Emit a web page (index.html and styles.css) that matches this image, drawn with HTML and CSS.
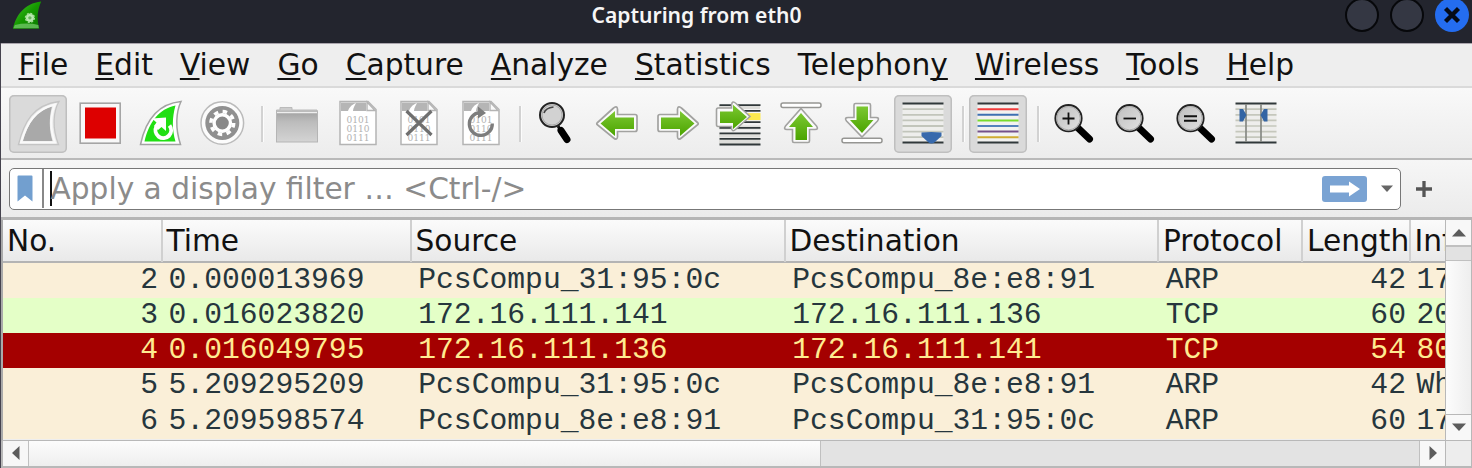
FILE: index.html
```html
<!DOCTYPE html>
<html lang="en">
<head>
<meta charset="utf-8">
<title>Capturing from eth0</title>
<link rel="stylesheet" href="styles.css">
</head>
<body>
<svg class="defs" width="0" height="0">
  <defs>
    <linearGradient id="green" x1="0" y1="0" x2="0" y2="1"><stop offset="0" stop-color="#7cc832"/><stop offset="1" stop-color="#4ba400"/></linearGradient>
    <linearGradient id="folder" x1="0" y1="0" x2="0" y2="1"><stop offset="0" stop-color="#a0a0a0"/><stop offset=".35" stop-color="#bcbcbc"/><stop offset="1" stop-color="#d4d4d4"/></linearGradient>
    <linearGradient id="lens" x1="0" y1="0" x2="1" y2="1"><stop offset="0" stop-color="#bdbdbd"/><stop offset="1" stop-color="#e2e2e2"/></linearGradient>
    <linearGradient id="logo" x1="0" y1="0" x2="1" y2="1"><stop offset="0" stop-color="#49c92c"/><stop offset=".5" stop-color="#159900"/><stop offset="1" stop-color="#087300"/></linearGradient>
    <symbol id="doc" viewBox="0 0 58 58">
      <path d="M11 6.500H39L47 14.500V49.500H11Z" fill="#fff" stroke="#b4b4b4" stroke-width="1.500"/>
      <path d="M12 7.500H37V16H24C24 13 26 10 27 8C22 10 20 13 19 16H12Z" fill="#b5b5b5"/>
      <path d="M38 7V15.500H46Z" fill="#fafafa" stroke="#b4b4b4" stroke-width="1.400"/>
      <text class="bits" x="17.500" y="28.300" textLength="23" lengthAdjust="spacingAndGlyphs">0101</text>
      <text class="bits" x="17.500" y="36.900" textLength="23" lengthAdjust="spacingAndGlyphs">0110</text>
      <text class="bits" x="17.500" y="45.500" textLength="23" lengthAdjust="spacingAndGlyphs">0111</text>
    </symbol>
    <symbol id="glass" viewBox="0 0 58 58">
      <path d="M34 33L45.500 44" stroke="#000" stroke-width="7" stroke-linecap="round"/>
      <circle cx="24.500" cy="23.200" r="13.200" fill="url(#lens)" stroke="#222" stroke-width="1.800"/>
      <circle cx="24.500" cy="23.200" r="11.700" fill="none" stroke="#aaa" stroke-width="1"/>
    </symbol>
  </defs>
</svg>
<div class="window">
  <header class="titlebar">
    <svg class="logo" viewBox="0 0 34 32"><path d="M1 30C4 16 13 3 31 1C27 10 26 19 29 30Z" fill="url(#logo)"/><path d="M1.500 29.500L3 26Q16 23 28 26L28.500 29.500Z" fill="#6ec564" opacity=".8"/><circle cx="19" cy="18.500" r="4.500" fill="#bce8b3" stroke="#a1dc94" stroke-width="2" stroke-dasharray="2 1.500"/><circle cx="19" cy="18.500" r="1.800" fill="#69b65e"/></svg>
    <h1 class="title">Capturing from eth0</h1>
    <div class="controls">
      <span class="control"></span><span class="control"></span>
      <span class="control close"><svg viewBox="0 0 34 34"><path d="M10.500 10.500L23.500 23.500M23.500 10.500L10.500 23.500" stroke="#050b18" stroke-width="4.300"/></svg></span>
    </div>
  </header>
  <nav class="menubar">
    <span><u>F</u>ile</span><span><u>E</u>dit</span><span><u>V</u>iew</span><span><u>G</u>o</span><span><u>C</u>apture</span><span><u>A</u>nalyze</span><span><u>S</u>tatistics</span><span>Telephon<u>y</u></span><span><u>W</u>ireless</span><span><u>T</u>ools</span><span><u>H</u>elp</span>
  </nav>
  <div class="toolbar">
    <div class="tool"><svg class="pressed" viewBox="0 0 58 58"><path d="M9.500 49.500C15 27 24 10 50 6.500C44 17 43 33 49.500 49.500Z" fill="#ececec" stroke="#c4c4c4" stroke-width="1.300"/><path d="M14 46C19 28 27 16 43 11.500C40 23 40 34 43.500 46Z" fill="#a9a9a9"/><path d="M12 47.500C18 27 27 14 46 9.500C41 21 41 34 46 47.500Z" fill="none" stroke="#fafafa" stroke-width="2"/></svg></div>
    <div class="tool"><svg viewBox="0 0 58 58"><rect x="9.200" y="8.200" width="40" height="40" fill="#f8f8f8" stroke="#a5a5a5" stroke-width="1.600"/><rect x="14" y="12.500" width="31" height="31" fill="#d00"/></svg></div>
    <div class="tool"><svg viewBox="0 0 58 58"><path d="M8.500 49.500C13 28 24 9 49 6.500C44 17 43 33 48.500 49.500Z" fill="#fff" stroke="#a2a2a2" stroke-width="1.500"/><path d="M12.500 46.500C17 27 27 14 43.500 10.500C40 23 40 34 43.500 46.500Z" fill="#20df13"/><path d="M37.500 30.500A7.800 7.800 0 1 1 24.500 31.500" fill="none" stroke="#fff" stroke-width="4"/><path d="M20 23.500L34 22.500V36L29.500 32L26 35L22 31L24.500 27.500Z" fill="#fff"/></svg></div>
    <div class="tool"><svg viewBox="0 0 58 58"><circle cx="29.300" cy="28" r="21.300" fill="#fcfcfc" stroke="#bbb" stroke-width="1.500"/><circle cx="29.300" cy="28" r="17" fill="#909090"/><circle cx="29.300" cy="28" r="11.400" fill="none" stroke="#fff" stroke-width="3.500" stroke-dasharray="4.500 4.453"/><circle cx="29.300" cy="28" r="8.200" fill="#888" stroke="#fff" stroke-width="3.400"/></svg></div>
    <i class="separator"></i>
    <div class="tool"><svg viewBox="0 0 58 58"><path d="M8.500 17V15H12V12.500H24V15H49V17Z" fill="#ccc" stroke="#bbb"/><rect x="8.500" y="16" width="41" height="31" fill="url(#folder)" stroke="#b5b5b5"/><path d="M9 17.500H49" stroke="#eee" stroke-width="1.500"/></svg></div>
    <div class="tool"><svg viewBox="0 0 58 58"><use href="#doc"/></svg></div>
    <div class="tool"><svg viewBox="0 0 58 58"><use href="#doc"/><path d="M16.500 16L41.500 40M41.500 16L16.500 40" stroke="#6f6f6f" stroke-width="3.200"/></svg></div>
    <div class="tool"><svg viewBox="0 0 58 58"><use href="#doc"/><path d="M28 17.500A11.500 11.500 0 1 0 40.300 28.500" fill="none" stroke="#7d7d7d" stroke-width="3.300"/><path d="M26 11.500L34 18L26 23.500Z" fill="#7d7d7d"/></svg></div>
    <i class="separator"></i>
    <div class="tool"><svg viewBox="0 0 58 58"><path d="M32 31L35 36" stroke="#111" stroke-width="3"/><path d="M35 35.500L41 44.500" stroke="#000" stroke-width="7" stroke-linecap="round"/><circle cx="26" cy="20" r="12" fill="#d2d2d2" stroke="#222" stroke-width="2"/><circle cx="26" cy="20" r="10" fill="none" stroke="#aaa"/><path d="M18 18Q19.500 13 27.500 12" fill="none" stroke="#444" stroke-width="1.600"/></svg></div>
    <div class="tool"><svg viewBox="0 0 58 58"><path d="M9 28L25 13.500Q29 10 29.500 14V19.500H47Q49 19.500 49 21.500V34.500Q49 36.500 47 36.500H29.500V42Q29 46 25 42.500L9 29.500Q8.500 28.500 9 28Z" fill="#fafafa" stroke="#a2a2a0" stroke-width="1.700"/><path d="M12.500 28.500L27 16V22.500H46V34H27V41Z" fill="url(#green)"/></svg></div>
    <div class="tool"><svg viewBox="0 0 58 58"><g transform="translate(58 0) scale(-1 1)"><path d="M9 28L25 13.500Q29 10 29.500 14V19.500H47Q49 19.500 49 21.500V34.500Q49 36.500 47 36.500H29.500V42Q29 46 25 42.500L9 29.500Q8.500 28.500 9 28Z" fill="#fafafa" stroke="#a2a2a0" stroke-width="1.700"/><path d="M12.500 28.500L27 16V22.500H46V34H27V41Z" fill="url(#green)"/></g></svg></div>
    <div class="tool"><svg viewBox="0 0 58 58"><path d="M9 12H50M9 32.500H50M9 40.500H50M9 47H50" stroke="#dededb" stroke-width="4"/><path d="M9.500 10.200H50.500M9.500 15.900H50.500M9.500 27.200H50.500M9.500 32.800H50.500M9.500 38.400H50.500M9.500 43.900H50.500M9.500 49.500H50.500" stroke="#30383a" stroke-width="1.800"/><path d="M38 21.600H50.500" stroke="#fce94f" stroke-width="7"/><path d="M40 21.500L26 34Q22 38 21.500 33V31.500H8Q6.500 31.500 6.500 29.500V15Q6.500 13 8 13H21.500V10Q22 5 26 8.500Z" fill="#fafafa" stroke="#a2a2a0" stroke-width="1.600"/><path d="M37 22L23 9.800V16.500H10V28H23V34Z" fill="url(#green)"/></svg></div>
    <div class="tool"><svg viewBox="0 0 58 58"><rect x="9" y="8" width="40" height="4.500" rx="2" fill="#fff" stroke="#969693" stroke-width="1.500"/><path d="M29 13.500L44.500 31Q47 34.500 43 34.500H37.500V46Q37.500 47.500 36 47.500H22Q20.500 47.500 20.500 46V34.500H15Q11 34.500 13.500 31Z" fill="#fafafa" stroke="#a2a2a0" stroke-width="1.600"/><path d="M29 18L41 32H35V45H23.500V32H17Z" fill="url(#green)"/></svg></div>
    <div class="tool"><svg viewBox="0 0 58 58"><rect x="9" y="43.300" width="40" height="4.500" rx="2" fill="#fff" stroke="#969693" stroke-width="1.500"/><path d="M29 42L44.500 26Q47 22.500 43 22.500H37.500V10Q37.500 8.500 36 8.500H22.500Q21 8.500 21 10V22.500H15Q11 22.500 13.500 26Z" fill="#fafafa" stroke="#a2a2a0" stroke-width="1.600"/><path d="M29 38L40.500 25H35V11.500H23.500V25H17Z" fill="url(#green)"/></svg></div>
    <div class="tool"><svg class="pressed" viewBox="0 0 58 58"><rect x="8.500" y="8" width="41" height="40" fill="#eeeeec"/><path d="M8.500 8.600H49.500M8.500 47.500H49.500" stroke="#30383a" stroke-width="2"/><path d="M8.500 14.200H49.500M8.500 19.800H49.500M8.500 25.400H49.500M8.500 31H49.500M8.500 36.600H49.500M8.500 42.200H49.500" stroke="#c2c5bb" stroke-width="1.800"/><path d="M27.500 37.500Q37 36.500 47.500 37.500V41L41 47Q37.500 50 34 47L27.500 41Z" fill="#3769ac"/></svg></div>
    <i class="separator"></i>
    <div class="tool"><svg class="pressed" viewBox="0 0 58 58"><rect x="8.500" y="8" width="41" height="40" fill="#f2f2f0"/><path d="M8.500 8.600H49.500M8.500 47.500H49.500" stroke="#30383a" stroke-width="2"/><g stroke-width="2"><path d="M8.500 14.200H49.500" stroke="#ef3b3b"/><path d="M8.500 19.800H49.500" stroke="#3e70b2"/><path d="M8.500 25.400H49.500" stroke="#78db2c"/><path d="M8.500 31H49.500" stroke="#5482bc"/><path d="M8.500 36.600H49.500" stroke="#74508a"/><path d="M8.500 42.200H49.500" stroke="#cfab32"/></g></svg></div>
    <i class="separator"></i>
    <div class="tool"><svg viewBox="0 0 58 58"><use href="#glass"/><path d="M18.500 23.500H30.500M24.500 17.500V29.500" stroke="#111" stroke-width="1.800"/></svg></div>
    <div class="tool"><svg viewBox="0 0 58 58"><use href="#glass"/><path d="M18.500 23.500H31" stroke="#111" stroke-width="1.800"/></svg></div>
    <div class="tool"><svg viewBox="0 0 58 58"><use href="#glass"/><path d="M18 21.300H31M18 25.700H31" stroke="#111" stroke-width="1.900"/></svg></div>
    <div class="tool"><svg viewBox="0 0 58 58"><rect x="8.500" y="8" width="41" height="40" fill="#eeeeec"/><path d="M8.500 8.600H49.500M8.500 47.500H49.500" stroke="#30383a" stroke-width="2"/><path d="M8.500 14.200H49.500M8.500 19.800H49.500M8.500 25.400H49.500M8.500 31H49.500M8.500 36.600H49.500M8.500 42.200H49.500" stroke="#c5c7bc" stroke-width="1.700"/><path d="M19 9V47M34 9V47" stroke="#868984" stroke-width="1.700"/><path d="M12.500 14H16L19.500 20L16 26.500H12.500ZM40.500 14H37L33.500 20L37 26.500H40.500Z" fill="#3465a4"/></svg></div>
  </div>
  <div class="filterbar">
    <div class="filter">
      <span class="bookmark"><svg viewBox="0 0 16 27"><path d="M.5 1.500Q.5.500 1.500.500H14.500Q15.500.500 15.500 1.500V26.500L8 20.500L.5 26.500Z" fill="#729fcf"/></svg></span>
      <i class="caret"></i><span class="placeholder">Apply a display filter … &lt;Ctrl-/&gt;</span>
      <svg class="apply" viewBox="0 0 45 26"><rect width="45" height="26" rx="3" fill="#7aa3d3"/><path d="M8 9.500H27V5.500L38 13L27 20.500V16.500H8Z" fill="#fff"/></svg>
      <svg class="dropdown" viewBox="0 0 12 8"><path d="M0 .5H12L6 7Z" fill="#666"/></svg>
    </div>
    <svg class="plus" viewBox="0 0 16 16"><path d="M0 8H16M8 0V16" stroke="#555" stroke-width="3.300"/></svg>
  </div>
  <main class="packets">
    <div class="list">
      <div class="row head"><span>No.</span><span>Time</span><span>Source</span><span>Destination</span><span>Protocol</span><span>Length</span><span>Info</span></div>
      <div class="row arp"><span>2</span><span>0.000013969</span><span>PcsCompu_31:95:0c</span><span>PcsCompu_8e:e8:91</span><span>ARP</span><span>42</span><span>17</span></div>
      <div class="row tcp"><span>3</span><span>0.016023820</span><span>172.16.111.141</span><span>172.16.111.136</span><span>TCP</span><span>60</span><span>20</span></div>
      <div class="row reset"><span>4</span><span>0.016049795</span><span>172.16.111.136</span><span>172.16.111.141</span><span>TCP</span><span>54</span><span>80</span></div>
      <div class="row arp"><span>5</span><span>5.209295209</span><span>PcsCompu_31:95:0c</span><span>PcsCompu_8e:e8:91</span><span>ARP</span><span>42</span><span>Wh</span></div>
      <div class="row arp"><span>6</span><span>5.209598574</span><span>PcsCompu_8e:e8:91</span><span>PcsCompu_31:95:0c</span><span>ARP</span><span>60</span><span>17</span></div>
    </div>
    <div class="vscroll">
      <span class="step"><svg viewBox="0 0 14 8"><path d="M0 7.500L7 0L14 7.500Z" fill="#5c5c5c"/></svg></span>
      <span class="vtrack"></span><span class="vthumb"></span>
      <span class="step down"><svg viewBox="0 0 14 8"><path d="M0 .5H14L7 8Z" fill="#5c5c5c"/></svg></span>
    </div>
    <div class="hscroll">
      <span class="hstep"><svg viewBox="0 0 8 14"><path d="M7.500 0V14L0 7Z" fill="#5c5c5c"/></svg></span>
      <span class="hthumb"></span><span class="htrack"></span>
      <span class="hstep"><svg viewBox="0 0 8 14"><path d="M.5 0V14L8 7Z" fill="#5c5c5c"/></svg></span>
    </div>
    <div class="corner"></div>
  </main>
</div>
</body>
</html>
```

FILE: styles.css
```css
* { box-sizing: border-box; }
body { margin: 0; overflow: hidden; background: #eee; font-family: "DejaVu Sans", sans-serif; }
svg { display: block; flex: none; }
.defs { position: absolute; }
.window { width: 1472px; height: 468px; display: flex; flex-direction: column; border-left: 1px solid #45434e; }

.titlebar { height: 43px; flex: none; margin-left: -1px; display: grid; grid-template-columns: 150px 1072px 170px; justify-content: space-between; background: #23252e; }
.logo { width: 32px; height: 31px; margin-left: 12px; }
.title { margin: 0; padding-right: 59px; text-align: center; color: #f6f6f6; font: 600 21.100px/30px "Noto Sans", sans-serif; white-space: nowrap; }
.controls { display: flex; justify-content: flex-end; gap: 11px; padding-right: 3px; margin-top: -2px; }
.control { width: 34px; height: 34px; flex: none; border: 2px solid #07080b; border-radius: 50%; background: #343743; }
.close { border: 0; background: #246df0; }

.menubar { height: 45px; flex: none; display: flex; gap: 27.100px; padding-left: 17.500px; border-top: 1px solid #aaa5ad; border-bottom: 2px solid #dadada; background: #eee; color: #111; font-size: 29.700px; line-height: 42px; white-space: nowrap; }
.menubar u { text-decoration-thickness: 2px; text-underline-offset: 3px; text-decoration-skip-ink: none; }

.toolbar { height: 72px; flex: none; display: flex; padding: 7px 0 0 6.600px; border-bottom: 2px solid #b9b9b9; background: linear-gradient(#f9f9f9, #ececec); }
.tool { width: 61.300px; flex: none; display: flex; justify-content: center; }
.tool svg { width: 58px; height: 58px; }
.tool .pressed { border-radius: 5px; background: #dadada; box-shadow: inset 0 0 0 1.500px #bfbfbf; }
.separator { width: 13.400px; height: 36px; margin-top: 11px; flex: none; background: linear-gradient(90deg, transparent 8px, #d2d2d2 8px 10px, #fcfcfc 10px 11px, transparent 11px); }
.bits { font: 10px "DejaVu Serif", serif; fill: #b2b2b2; }

.filterbar { height: 57px; flex: none; display: flex; align-items: center; padding-left: 8px; background: linear-gradient(#f6f6f6, #ebebeb); }
.filter { width: 1392px; height: 42px; display: flex; align-items: center; border: 1.500px solid #777; border-radius: 5px; background: #fff; }
.bookmark { width: 34px; height: 39px; display: flex; align-items: center; justify-content: center; padding-right: 2px; border-right: 2px solid #888; }
.bookmark svg { width: 16px; height: 27px; }
.caret { width: 2px; height: 35px; margin-left: 5.500px; background: #111; }
.placeholder { flex: 1; margin-left: -1px; color: #8b8b8b; font-size: 29.650px; line-height: 38px; white-space: nowrap; }
.apply { width: 45px; height: 26px; }
.dropdown { width: 12px; height: 8px; margin: 0 7.500px 0 14px; }
.plus { width: 16px; height: 16px; margin-left: 15px; }

.packets { flex: 1; display: grid; grid-template: 220.500px 1fr / 1445px 1fr; border-top: 3px solid #b5b5b5; }
.list { overflow: hidden; border-left: 2px solid #aaa; border-right: 1px solid #b8b8b8; border-bottom: 1px solid #b8b8b8; }
.row { width: 1460px; height: 35.300px; display: grid; grid-template-columns: 159.500px 249px 374px 373.500px 144px 107.500px 52.500px; color: #26363d; font: 29.700px/34px "Liberation Mono", monospace; white-space: nowrap; }
.row span { padding-left: 6px; }
.row span:nth-child(3), .row span:nth-child(4), .row span:nth-child(5) { padding-left: 6.700px; }
.row span:nth-child(1), .row span:nth-child(6) { padding: 0 4.500px 0 0; text-align: right; }
.row span:nth-child(7) { padding-left: 6px; }
.row.head { height: 42.500px; border-bottom: 2px solid #b4b4b4; background: linear-gradient(#fbfbfb, #e9e9e9); color: #111; font: 29.650px/42px "DejaVu Sans", sans-serif; }
.row.head span:nth-child(n) { padding: 0 0 0 4px; border-right: 2px solid #d0d0d0; text-align: left; }
.arp { background: #faefd8; }
.tcp { background: #e4ffc7; }
.row.reset { background: #a40000; color: #ffeb91; }

.vscroll { display: flex; flex-direction: column; border-right: 1px solid #b8b8b8; border-bottom: 1px solid #b8b8b8; }
.step { height: 25px; display: flex; align-items: center; justify-content: center; background: #f8f8f8; }
.step svg { width: 14px; height: 8px; }
.down { height: 26px; border-top: 1px solid #b8b8b8; }
.vtrack { height: 16px; border-top: 2px solid #c0c0c0; border-bottom: 1px solid #c0c0c0; background: #e2e2e2; }
.vthumb { flex: 1; background: linear-gradient(90deg, #fcfcfc, #eee); }
.hscroll { display: flex; border: solid #b8b8b8; border-width: 0 1px 2px 2px; }
.hstep { width: 25px; display: flex; align-items: center; justify-content: center; background: #f7f7f7; }
.hstep svg { width: 8px; height: 14px; }
.hthumb { width: 793px; border: solid #c0c0c0; border-width: 0 1px; background: linear-gradient(#fcfcfc, #eee); }
.htrack { flex: 1; border-right: 1px solid #c0c0c0; background: #e3e3e3; }
.corner { border: solid #b8b8b8; border-width: 0 1px 2px 0; background: #ededed; }
```
